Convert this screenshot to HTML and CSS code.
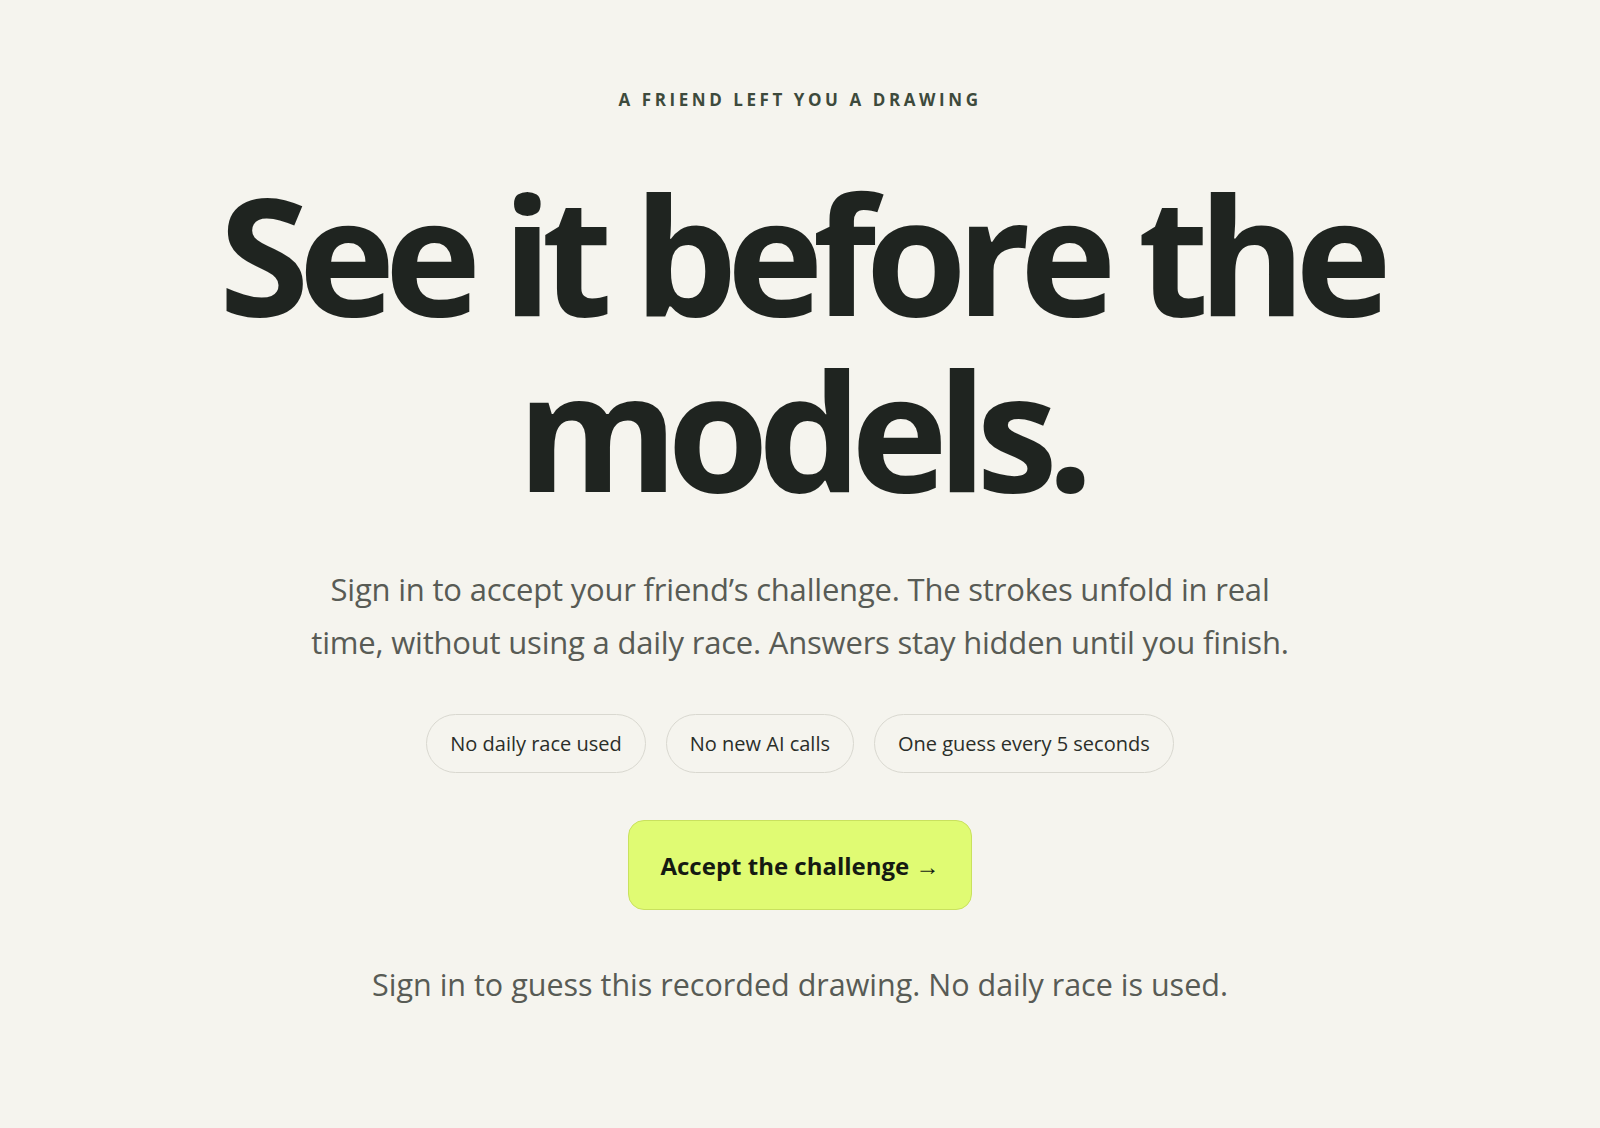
FILE: index.html
```html
<!DOCTYPE html>
<html lang="en">

<head>
    <meta charset="UTF-8">
    <meta name="viewport" content="width=device-width, initial-scale=1.0">
    <title>A friend left you a drawing</title>
    <link rel="stylesheet" href="styles.css">
</head>

<body>
    <main class="invite">
        <p class="eyebrow">A friend left you a drawing</p>
        <h1 class="headline">See it before the models.</h1>
        <p class="lead">Sign in to accept your friend’s challenge. The strokes unfold in real time, without using a daily race. Answers stay hidden until you finish.</p>
        <ul class="chips">
            <li class="chip">No daily race used</li>
            <li class="chip">No new AI calls</li>
            <li class="chip">One guess every 5 seconds</li>
        </ul>
        <button type="button" class="cta">Accept the challenge →</button>
        <p class="note">Sign in to guess this recorded drawing. No daily race is used.</p>
    </main>
</body>

</html>
```

FILE: styles.css
```css
body {
    margin: 0;
    min-height: 100vh;
    background-color: #f5f4ee;
    color: #1f2420;
    font-family: "Open Sans", "Noto Sans", sans-serif;
}

.invite {
    display: flex;
    flex-direction: column;
    align-items: center;
    padding-top: 90px;
    text-align: center;
}

.eyebrow {
    margin: 0;
    font-size: 17px;
    line-height: 20px;
    font-weight: 700;
    letter-spacing: 0.21em;
    text-transform: uppercase;
    color: #3d4a3c;
}

.headline {
    margin: 55px 0 0;
    max-width: 1300px;
    font-size: 164px;
    line-height: 176px;
    font-weight: 700;
    letter-spacing: -0.066em;
    color: #1f2420;
}

.lead {
    margin: 46px 0 0;
    max-width: 1000px;
    font-size: 31px;
    line-height: 53px;
    letter-spacing: -0.2px;
    color: #585b55;
}

.chips {
    display: flex;
    gap: 20px;
    margin: 45px 0 0;
    padding: 0;
    list-style: none;
}

.chip {
    display: flex;
    align-items: center;
    height: 57px;
    padding: 0 23px;
    font-size: 20px;
    color: #2a2e29;
    border: 1.5px solid #d9d8d0;
    border-radius: 999px;
}

.cta {
    margin-top: 47px;
    width: 344px;
    height: 90px;
    font-family: inherit;
    font-size: 24px;
    font-weight: 700;
    color: #151a12;
    background-color: #e0fb73;
    border: 1.5px solid #c9e15e;
    border-radius: 16px;
    cursor: pointer;
}

.cta:hover {
    background-color: #d6f35f;
}

.note {
    margin: 52px 0 0;
    font-size: 30.5px;
    line-height: 44px;
    color: #585b55;
}
```
